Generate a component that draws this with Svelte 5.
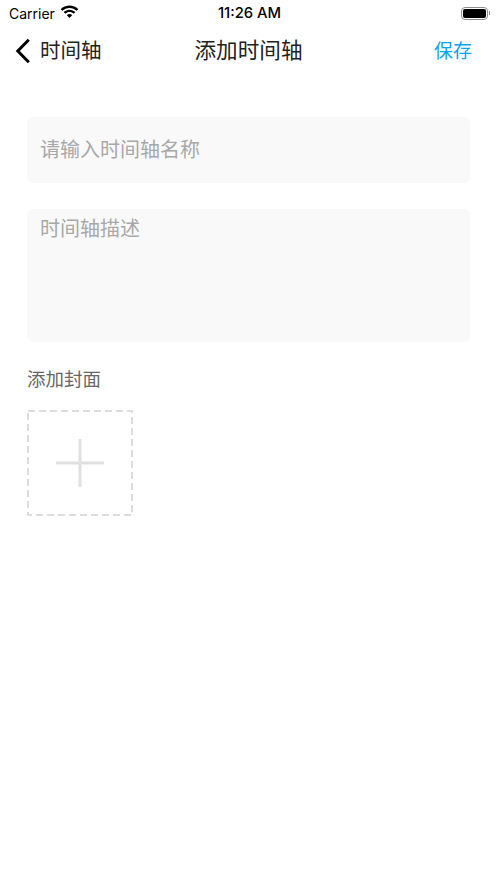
<script lang="ts">
  let name = $state('');
  let description = $state('');
</script>

<div class="page">
  <div class="status-bar">
    <div class="status-left">
      <span class="carrier">Carrier</span>
      <svg class="wifi" width="19" height="14" viewBox="0 0 20 14" aria-hidden="true">
        <path d="M10 2.800c2.900 0 5.500 1.100 7.500 3L19.300 4C16.800 1.600 13.600.2 10 .2S3.200 1.600.7 4l1.800 1.800c2-1.900 4.600-3 7.500-3z" fill="#000"/>
        <path d="M10 7.100c1.700 0 3.200.6 4.400 1.700l1.800-1.800C14.500 5.500 12.400 4.500 10 4.500S5.500 5.500 3.800 7l1.800 1.800C6.800 7.700 8.300 7.100 10 7.100z" fill="#000"/>
        <path d="M10 9.200c-1.100 0-2.100.4-2.800 1.100l2.800 3 2.800-3c-.7-.7-1.700-1.100-2.800-1.100z" fill="#000"/>
      </svg>
    </div>
    <span class="clock">11:26 AM</span>
    <div class="battery">
      <div class="battery-body"><div class="battery-fill"></div></div>
      <div class="battery-cap"></div>
    </div>
  </div>

  <header class="nav">
    <button class="back" type="button">
      <svg width="16" height="26" viewBox="0 0 16 26" aria-hidden="true">
        <path d="M13.800 1.800 2.800 13l11 11.200" fill="none" stroke="#000" stroke-width="3"/>
      </svg>
      <span class="back-label">时间轴</span>
    </button>
    <h1 class="title">添加时间轴</h1>
    <button class="save" type="button">保存</button>
  </header>

  <main class="form">
    <input class="name-input" placeholder="请输入时间轴名称" bind:value={name} />
    <textarea class="desc-input" placeholder="时间轴描述" bind:value={description}></textarea>
    <div class="cover-label">添加封面</div>
    <button class="cover" type="button" aria-label="添加封面">
      <svg width="106" height="106" viewBox="0 0 106 106" aria-hidden="true">
        <rect x="1" y="1" width="104" height="104" fill="none" stroke="#dcdcdc" stroke-width="2" stroke-dasharray="7 4"/>
        <path d="M29 53h48M53 29v48" stroke="#e0e0e0" stroke-width="3" fill="none"/>
      </svg>
    </button>
  </main>
</div>

<style>
  :global(body) {
    margin: 0;
    background: #fff;
  }

  .page {
    height: 883px;
    overflow: hidden;
    font-family: "Inter", "Noto Sans CJK SC", sans-serif;
    background: #fff;
  }

  .status-bar {
    height: 26px;
    display: grid;
    grid-template-columns: 1fr auto 1fr;
    align-items: center;
    padding: 0 7px 0 9px;
    color: #000;
  }

  .status-left {
    display: flex;
    align-items: center;
    gap: 5px;
  }

  .carrier {
    font-size: 14px;
  }

  .wifi {
    margin-top: -2px;
  }

  .clock {
    font-size: 14.800px;
    font-weight: 500;
  }

  .battery {
    justify-self: end;
    display: flex;
    align-items: center;
    gap: 1px;
  }

  .battery-body {
    width: 27px;
    height: 13px;
    box-sizing: border-box;
    border: 1px solid #8e8e8e;
    border-radius: 4px;
    padding: 1px;
  }

  .battery-fill {
    height: 100%;
    background: #000;
    border-radius: 2px;
  }

  .battery-cap {
    width: 1px;
    height: 4px;
    background: #8e8e8e;
  }

  .nav {
    height: 50px;
    display: grid;
    grid-template-columns: 1fr auto 1fr;
    align-items: center;
    padding: 0 20px;
  }

  .back {
    justify-self: start;
    display: flex;
    align-items: center;
    gap: 9px;
    margin-left: -5px;
    padding: 0;
    border: 0;
    background: none;
    font: inherit;
    font-size: 20.500px;
    color: #222;
  }

  .back-label {
    padding-bottom: 4px;
  }

  .title {
    margin: 0;
    padding-bottom: 6px;
    font-size: 21.600px;
    font-weight: 400;
    color: #222;
  }

  .save {
    justify-self: end;
    margin-right: 5px;
    padding: 0 0 4px;
    border: 0;
    background: none;
    font: inherit;
    font-size: 19px;
    color: #0aa5ec;
  }

  .form {
    display: flex;
    flex-direction: column;
    align-items: flex-start;
    padding: 41px 27px 0;
  }

  .name-input,
  .desc-input {
    width: 100%;
    box-sizing: border-box;
    border: 0;
    outline: none;
    border-radius: 6px;
    background: #f9f9f9;
    font: inherit;
    font-size: 20px;
    color: #333;
    padding: 0 13px;
  }

  .name-input::placeholder,
  .desc-input::placeholder {
    color: #a8a8a8;
    opacity: 1;
  }

  .name-input {
    height: 66px;
  }

  .desc-input {
    height: 133px;
    margin-top: 26px;
    padding-top: 4px;
    resize: none;
    display: block;
  }

  .cover-label {
    margin-top: 24px;
    font-size: 18.500px;
    line-height: 26px;
    color: #666;
  }

  .cover {
    width: 106px;
    height: 106px;
    margin-top: 18px;
    padding: 0;
    border: 0;
    background: none;
  }

  .cover svg {
    display: block;
  }
</style>
